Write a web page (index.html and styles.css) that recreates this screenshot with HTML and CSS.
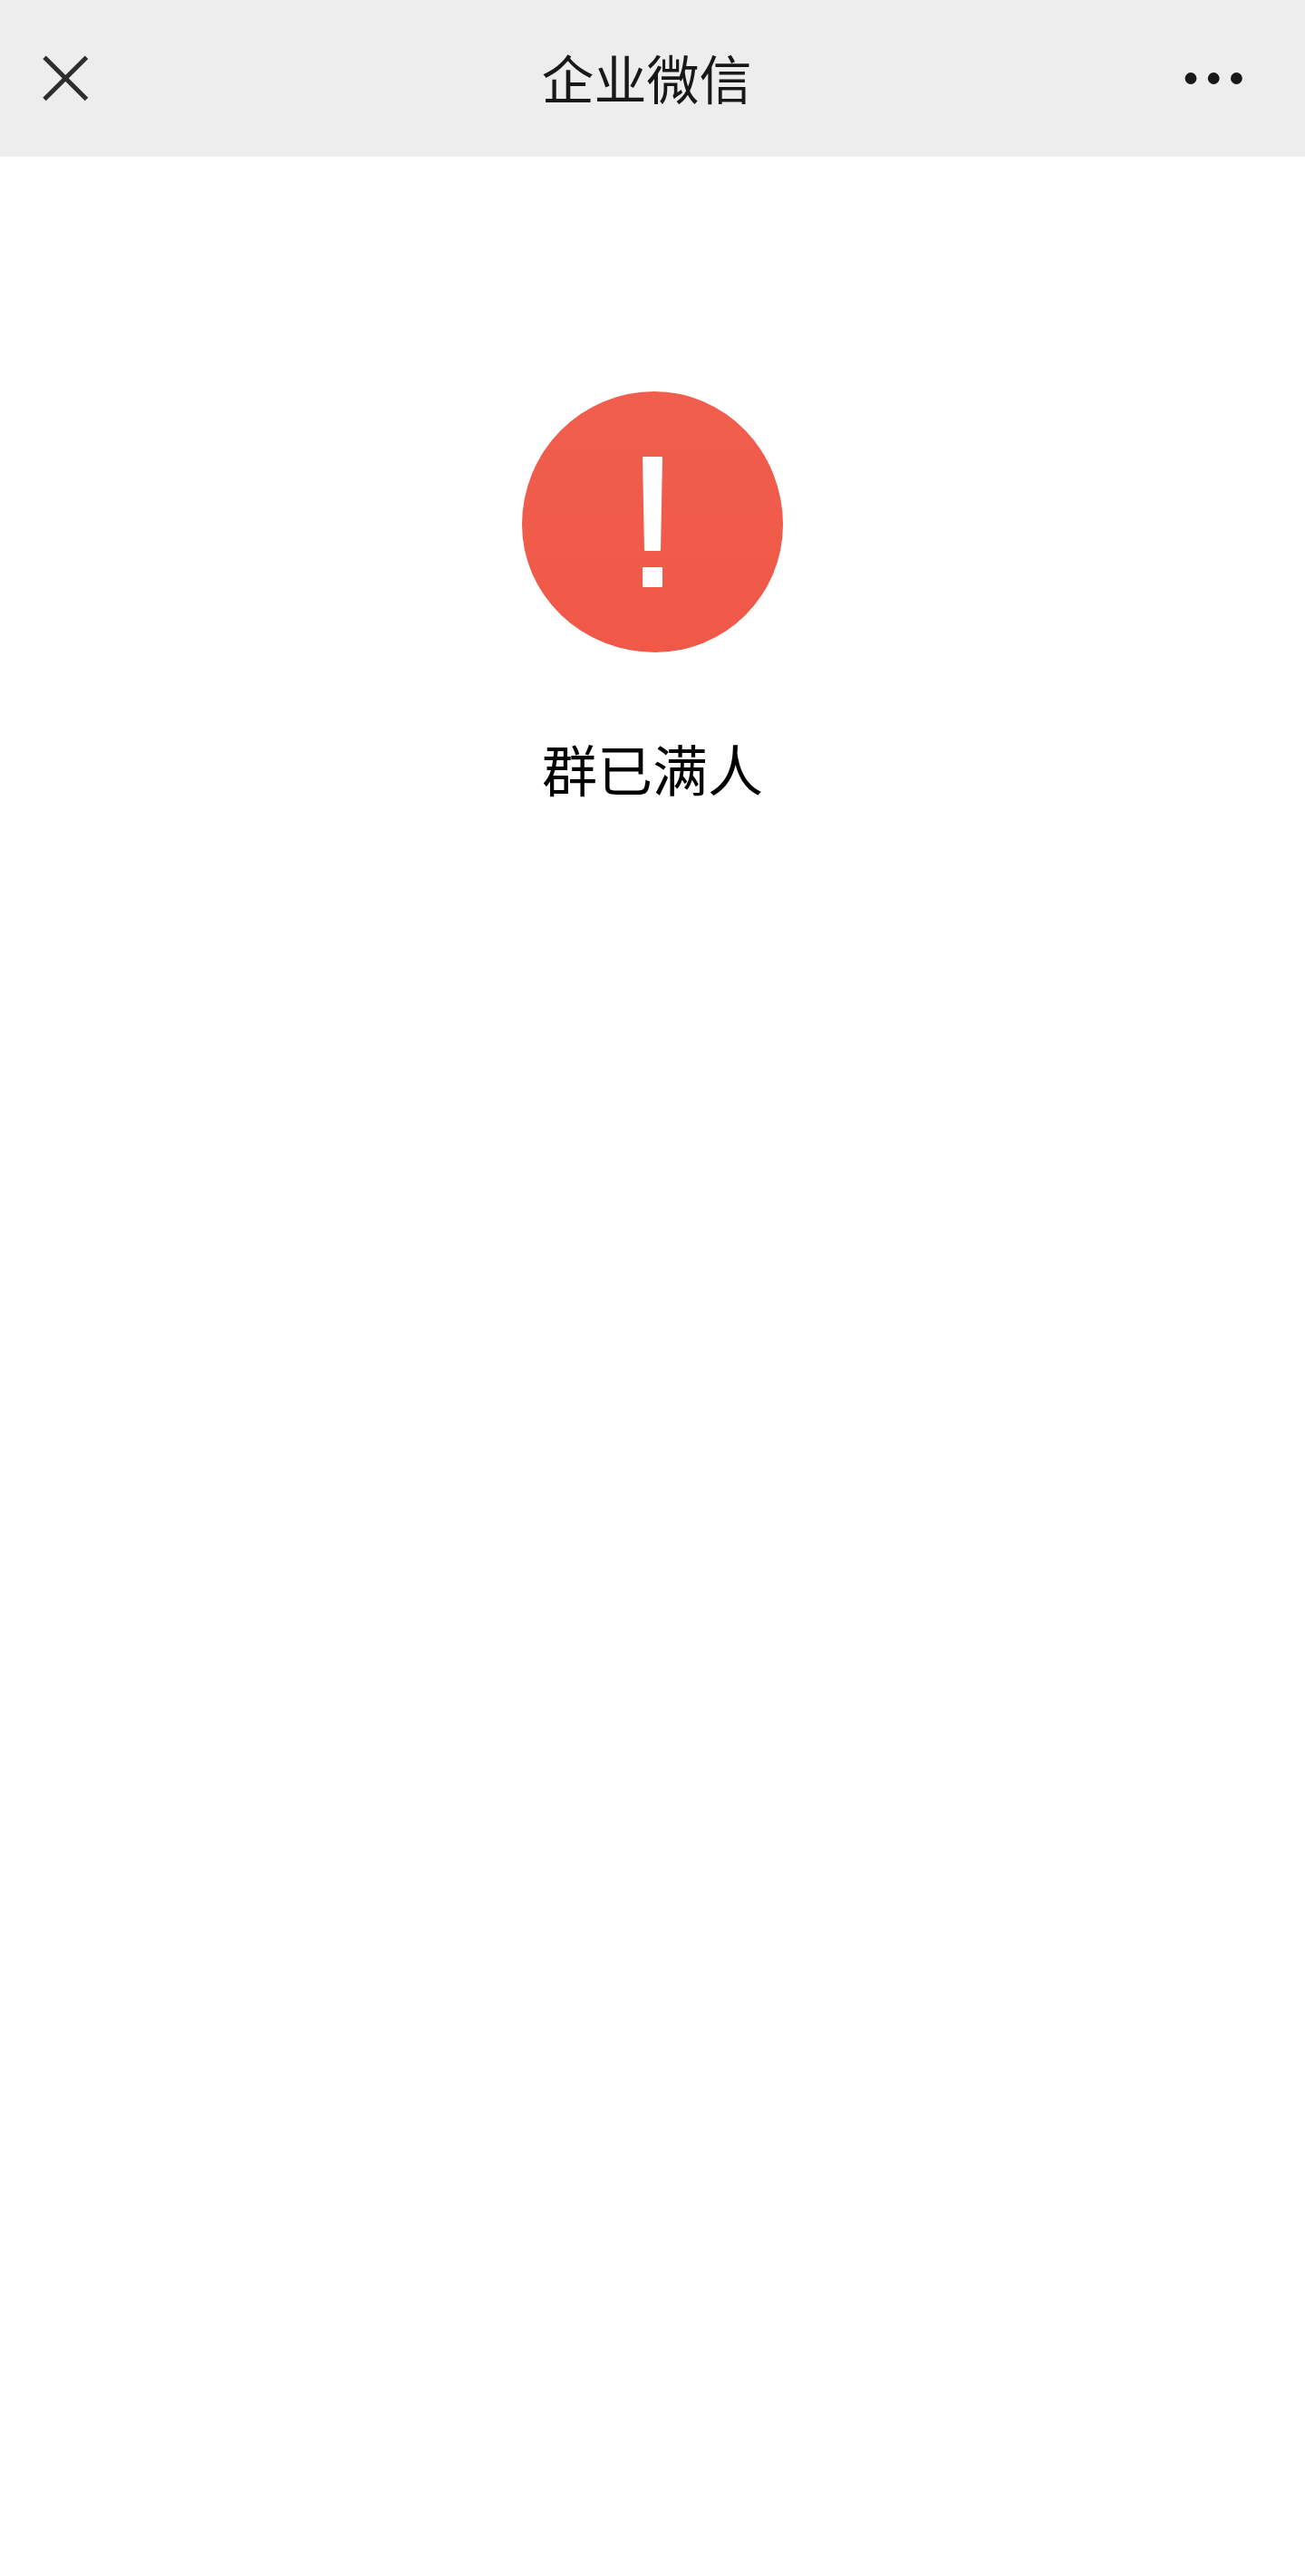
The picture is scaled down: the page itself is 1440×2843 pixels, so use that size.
FILE: index.html
```html
<!DOCTYPE html>
<html lang="zh-CN">
<head>
  <meta charset="utf-8">
  <meta name="viewport" content="width=device-width, initial-scale=1">
  <title>企业微信</title>
  <link rel="stylesheet" href="styles.css">
</head>
<body>
  <header class="navbar">
    <button class="nav-button nav-close" type="button" aria-label="关闭">
      <svg width="64" height="64" viewBox="0 0 64 64" aria-hidden="true">
        <path d="M9 9.300L55.500 55.500M55.500 9.300L9 55.500" fill="none" stroke="#2d2d2d" stroke-width="5"/>
      </svg>
    </button>
    <h1 class="navbar-title">企业微信</h1>
    <button class="nav-button nav-more" type="button" aria-label="更多">
      <svg width="64" height="64" viewBox="0 0 64 64" fill="#181818" aria-hidden="true">
        <circle cx="7" cy="32.500" r="6.400"/>
        <circle cx="32.200" cy="32.500" r="6.400"/>
        <circle cx="57.400" cy="32.500" r="6.400"/>
      </svg>
    </button>
  </header>
  <main class="result">
    <svg class="result-icon" viewBox="0 0 288 288" aria-hidden="true">
      <defs>
        <linearGradient id="alert" x1="0" y1="0" x2="0" y2="1">
          <stop offset="0" stop-color="#f05e4d"/>
          <stop offset="1" stop-color="#f05848"/>
        </linearGradient>
      </defs>
      <path d="M0 147A146 147 0 0 1 146 0A142 147 0 0 1 288 147A141 141 0 0 1 147 288A147 141 0 0 1 0 147z" fill="url(#alert)"/>
      <path d="M134 72h20q1 0 1 1l-2 102q0 1-1 1h-16q-1 0-1-1l-2-102q0-1 1-1z" fill="#fff"/>
      <rect x="133" y="194" width="22" height="22" rx="1" fill="#fff"/>
    </svg>
    <p class="result-message">群已满人</p>
  </main>
</body>
</html>
```
FILE: styles.css
```css
* {
  box-sizing: border-box;
}

body {
  margin: 0;
  background: #fff;
  color: #000;
  font-family: "Noto Sans CJK SC", sans-serif;
}

.navbar {
  display: flex;
  align-items: flex-start;
  justify-content: space-between;
  padding: 54px 0 55px;
  background: #ededed;
}

.nav-button {
  display: flex;
  border: 0;
  background: none;
  cursor: pointer;
}

.nav-close {
  padding: 0 40px;
}

.nav-more {
  padding: 0 69px 0 24px;
}

.navbar-title {
  margin: 0;
  color: #181818;
  font-size: 58px;
  font-weight: 400;
  line-height: 62px;
}

.result {
  display: flex;
  flex-direction: column;
  align-items: center;
  padding: 259px 32px 64px;
}

.result-icon {
  width: 288px;
  height: 288px;
}

.result-message {
  margin: 84px 0 0;
  font-size: 61px;
  line-height: 88px;
}
```
